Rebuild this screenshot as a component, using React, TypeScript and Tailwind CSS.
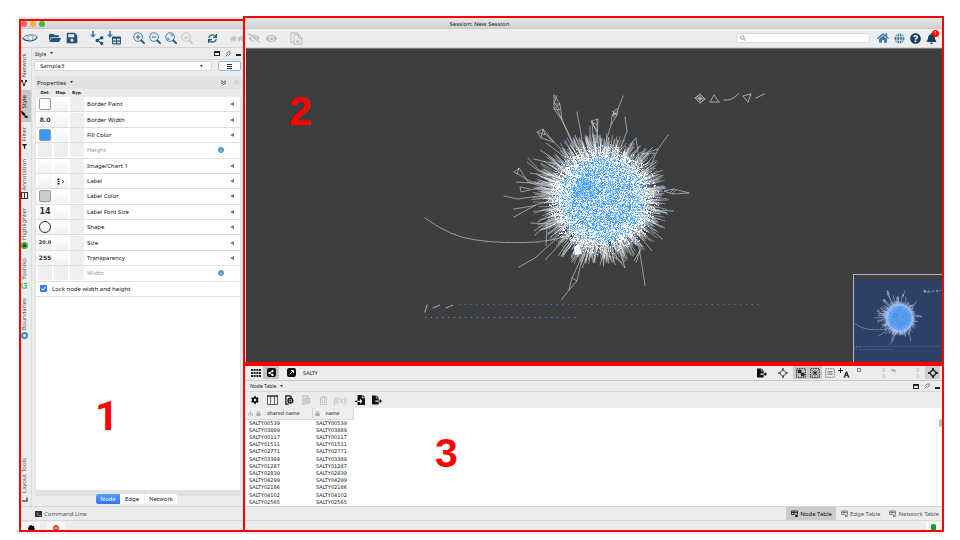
import React from "react";
import {
  FaFolderOpen, FaSave, FaShareAlt, FaTable, FaSync, FaHome, FaQuestionCircle,
  FaBell, FaEyeSlash, FaEye, FaSearch, FaFilter, FaCog, FaFileExport,
  FaFileImport, FaLock, FaSitemap, FaTerminal, FaPaintBrush, FaInfoCircle,
  FaMinusCircle, FaCloud, FaFont, FaRegTrashAlt,
} from "react-icons/fa";

/* ---------- network drawing ---------- */

function makeRandom(seed: number) {
  let a = seed;
  return () => {
    a = (a + 0x6d2b79f5) | 0;
    let t = Math.imul(a ^ (a >>> 15), 1 | a);
    t = (t + Math.imul(t ^ (t >>> 7), 61 | t)) ^ t;
    return ((t ^ (t >>> 14)) >>> 0) / 4294967296;
  };
}

const CX = 602;
const CY = 198;

function buildHub() {
  const rnd = makeRandom(7);
  let spikes = "";
  let tips = "";
  for (let i = 0; i < 680; i++) {
    const a = rnd() * Math.PI * 2;
    const left = Math.cos(a) < -0.3 ? 4 : 0;
    const r1 = 52 + Math.pow(rnd(), 1.2) * (15 + left);
    const b = a + (rnd() - 0.5) * 0.18;
    const x0 = CX + Math.cos(a) * 38;
    const y0 = CY + Math.sin(a) * 38;
    const x1 = CX + Math.cos(b) * r1;
    const y1 = CY + Math.sin(b) * r1;
    spikes += `M${x0.toFixed(1)} ${y0.toFixed(1)}L${x1.toFixed(1)} ${y1.toFixed(1)}`;
    if (i % 2) tips += `M${Math.round(x1)} ${Math.round(y1)}h1v1h-1z`;
  }
  let white = "";
  let pale = "";
  let blue = "";
  for (let y = -58; y <= 58; y++) {
    for (let x = -58; x <= 58; x++) {
      const r = Math.hypot(x, y);
      if (r > 58) continue;
      const keep = r < 40 ? 1 : Math.pow((58 - r) / 18, 1.3);
      if (rnd() > keep) continue;
      const core = Math.hypot(x + 18, y + 11);
      const pBlue = core < 11 ? 0.55 : r < 32 ? 0.36 : r < 42 ? 0.24 : 0.14;
      const p = rnd();
      const cell = `M${CX + x} ${CY + y}h1v1h-1z`;
      if (p < pBlue) blue += cell;
      else if (p < pBlue + (r < 42 ? 0.34 : 0.16)) pale += cell;
      else white += cell;
    }
  }
  return { spikes, tips, white, pale, blue };
}

const HUB = buildHub();

const BRANCHES = [
  "M554 94L560 103L562 119L554 108ZM554 108L560 103L555 103L560 109L554 108M557 94L554 103M562 119L557 108M562 119L577 150M562 119L574 146",
  "M623 95L618 108L617 114L611 124L612 115L615 109L618 108M612 115L618 110M612 110L617 115M613 113h5M614 110v7M611 124L605 144",
  "M537 131L543 128L554 141L541 137ZM537 131L545 134L543 128L541 137M544 132L554 141L572 160",
  "M577 111L582 138M590 125L590 147M625 116L627 130L621 146M591 120L598 118L597 142M592 120L597 131L591 120L597 124M594 142L592 121M597 142L597 118",
  "M668 134L658 148L650 166M658 148L642 153L655 152L645 166M636 137L629 145M636 137L639 158M653 146L640 158",
  "M689 192L674 188L664 190M689 192L672 193L664 190M674 188L670 192M672 193L676 189",
  "M514 171L519 167L528 181L545 187M514 171L530 180L542 184M519 167L517 173M520 186L521 191L534 188L545 189M520 186L530 188",
  "M504 195L518 198L545 194M514 208L532 205L550 200M514 216L536 204M535 234L555 216M531 222L552 223M534 230L550 218",
  "M528 157L540 170L550 175M527 161L540 171M534 158L555 163M540 149L560 162M546 142L566 157M530 172L550 175M516 181L545 183",
  "M519 266L535 257L555 239M546 258L563 240M558 255L568 241M546 245L547 222M571 262L585 246M582 267L590 249",
  "M562 298L569 289L572 277L577 280L569 289M577 280L580 266L585 253M572 277L583 253M573 258L580 250",
  "M645 284L641 259L639 246M652 250L642 238M662 238L650 227M673 210L655 209M665 227L648 219M625 267L610 247",
  "M600 264L603 254L616 257L622 262M616 264L604 248M625 267L620 250M641 247L636 262M634 260L640 249",
  "M425 217Q451 236 476 239Q504 243 537 241Q555 239 568 235",
];

const ISLANDS = [
  "M695 97L700 93L705 98L700 102ZM700 93V102M695 97L705 98M697 95L703 100M703 95L697 100",
  "M714 94L710 101H719Z",
  "M724 99Q732 100 738 93",
  "M743 95L751 93L748 101Z",
  "M756 97L764 93",
  "M427 304L425 311M433 307L440 304M446 307L453 304",
];

const DOTS: Array<[number, number]> = [
  [554, 94], [562, 119], [623, 95], [611, 124], [537, 131], [553, 141], [577, 111], [625, 116], [627, 130],
  [668, 134], [658, 148], [636, 137], [689, 192], [514, 171], [520, 186], [504, 195], [518, 198], [514, 208],
  [514, 216], [531, 222], [535, 234], [528, 157], [534, 158], [519, 266], [546, 258], [562, 298], [569, 289],
  [572, 277], [645, 284], [662, 238], [673, 210], [425, 217], [443, 228], [455, 233], [486, 241], [508, 241],
  [537, 241], [695, 97], [700, 93], [705, 98], [700, 102], [714, 94], [710, 101], [719, 101], [724, 99], [738, 93],
  [743, 95], [748, 101], [751, 93], [756, 97], [764, 93], [427, 304], [425, 311], [433, 307], [446, 307],
];

function Graph() {
  return (
    <g>
      <path d={HUB.spikes} stroke="#fff" strokeOpacity=".5" strokeWidth=".8" fill="none" />
      <path d={BRANCHES.join("")} stroke="#cfcfcf" strokeOpacity=".8" strokeWidth=".8" fill="none" />
      <path d={ISLANDS.join("")} stroke="#c4c4c4" strokeWidth=".8" fill="none" />
      <path d={HUB.tips} fill="#4a9df5" opacity=".7" />
      <circle cx={CX} cy={CY} r="40" fill="#cfe4fc" />
      <path d={HUB.white} fill="#fff" />
      <path d={HUB.pale} fill="#a3cffd" />
      <path d={HUB.blue} fill="#4ba3ff" />
      <path d="M574 246l5-3l3 10l-7 1z" fill="#fff" opacity=".9" />
      {DOTS.map(([x, y], i) => (
        <rect key={i} x={x - 0.5} y={y - 0.5} width="1.2" height="1.2" fill="#3f97f2" />
      ))}
      <line x1="459" x2="761" y1="303.5" y2="303.5" stroke="#3b82cc" strokeWidth="1" strokeDasharray="1.2 4.54" />
      <line x1="425" x2="576" y1="316.5" y2="316.5" stroke="#4a9df5" strokeWidth="1" strokeDasharray="1.2 4.54" />
    </g>
  );
}

/* ---------- small icons ---------- */

type ZoomKind = "in" | "out" | "fit" | "sel";

function Magnifier({ kind }: { kind: ZoomKind }) {
  const off = kind === "sel";
  const ring = off ? "#c4c4c4" : "#3d7ba6";
  const grip = off ? "#c4c4c4" : "#1f567a";
  const inner = {
    in: "M5.5 3v5M3 5.5h5",
    out: "M3 5.5h5",
    fit: "M6 3.2h1.8V5M5 7.8H3.2V6",
    sel: "M3.4 5.6l1.6 1.6 2.8-3",
  }[kind];
  return (
    <svg viewBox="0 0 13 13" className="size-3">
      <circle cx="5.5" cy="5.5" r="4.7" fill="none" stroke={ring} strokeWidth="1" />
      <path d="M9 9l3 3" stroke={grip} strokeWidth="2" strokeLinecap="round" />
      <path d={inner} stroke={ring} strokeWidth="1.2" fill="none" />
    </svg>
  );
}

function Logo() {
  return (
    <svg viewBox="0 0 16 10" className="w-4">
      <path d="M3 7.4Q0 6.4 1.2 4.6Q3 2 8 1.8Q13 1.6 14.6 3.2" fill="none" stroke="#4a86ad" strokeWidth="1" />
      <path d="M1.2 5.4Q4 8.8 10 7.6Q15.400 6.2 14.8 3.4" fill="none" stroke="#1f567a" strokeWidth="1.2" />
      <path d="M8.500 2.400Q4.500 3.500 5 5.400Q5.500 7 9 7.400M9 2.200Q12.500 3.600 10.500 6.800" fill="none" stroke="#6fa0bf" strokeWidth=".8" />
    </svg>
  );
}

function ImportArrow() {
  return (
    <svg viewBox="0 0 7 8" className="absolute top-px left-px w-[6px]" fill="#3d7ba6">
      <path d="M2.500 0h2v4H7L3.500 8L0 4h2.500z" />
    </svg>
  );
}

function GlobeIcon() {
  return (
    <svg viewBox="0 0 12 12" className="size-[11px]">
      <circle cx="6" cy="6" r="5.5" fill="#3d7ba6" />
      <path d="M0 4h12M0 8h12M6 0v12M3.8 .8Q1.8 6 3.8 11.2M8.2 .8Q10.2 6 8.2 11.2" stroke="#dfe9f0" strokeWidth=".9" fill="none" />
    </svg>
  );
}

function DocsIcon() {
  return (
    <svg viewBox="0 0 13 13" className="size-[13px]" fill="none" stroke="#b9b9b9">
      <path d="M3.500 10.500h-2.500V.8h6.500v1M4 2.500h4.500l3.500 3.500v6.300H4zM8.500 2.500V6H12" />
      <path d="M10 8L6.500 9.500L10 11" strokeWidth=".8" />
      <circle cx="6.800" cy="9.500" r=".6" fill="#b9b9b9" />
    </svg>
  );
}

function AddColumnIcon({ off }: { off?: boolean }) {
  const c = off ? "#bdbdbd" : "#151515";
  return (
    <svg viewBox="0 0 10 11" className="h-[10px] w-[9px]" fill="none" stroke={c}>
      <path d="M4 10.200H1V.8h4.500l2 2" strokeWidth="1.400" />
      <circle cx="6" cy="6.200" r="2.600" strokeWidth="1.500" />
      <path d="M6 4.800v2.800M4.600 6.200h2.800" strokeWidth=".9" />
    </svg>
  );
}

function ColumnsIcon() {
  return (
    <svg viewBox="0 0 11 10" className="w-[11px]" fill="none" stroke="#555">
      <path d="M.5 1v8.500h3V1M7.500 1v8.500h3V1M3.500 9.500h4" strokeWidth=".9" />
      <path d="M0 1h11" stroke="#222" strokeWidth="1.400" />
    </svg>
  );
}

function TargetIcon({ thin }: { thin?: boolean }) {
  return (
    <svg viewBox="0 0 10 10" className="size-[10px]" fill="none" stroke="#222" strokeWidth={thin ? 0.9 : 1.3}>
      <path d="M5 1.500L8.500 5L5 8.500L1.500 5Z" />
      <path d="M5 0v2.400M5 7.600V10M0 5h2.400M7.600 5H10" strokeWidth={thin ? 1.2 : 1.8} />
    </svg>
  );
}

function SelectBoxIcon({ kind }: { kind: "node" | "edge" | "label" }) {
  const c = kind === "label" ? "#777" : "#222";
  return (
    <svg viewBox="0 0 10 10" className="size-[10px]" fill="none" stroke={c}>
      <rect x=".7" y=".7" width="8.600" height="8.600" strokeDasharray="1.500 .8" strokeWidth="1" />
      {kind === "node" && <path d="M2.200 2.200h2.800v2.600h-2.800zM5.400 5.200h2.600v2.600h-2.600zM4 4l2 2" fill={c} />}
      {kind === "edge" && <path d="M2.500 2.500l5 5M7.500 2.500l-5 5M2.300 5h5.400M5 2.300v5.400" strokeWidth=".8" />}
      {kind === "label" && <path d="M2.500 3.500h5M2.500 5h5M2.500 6.500h5" strokeWidth=".8" />}
    </svg>
  );
}

function PanelControls() {
  return (
    <span className="flex items-center gap-[5px] text-[#222]">
      <button aria-label="Maximize panel" className="h-[5px] w-[6px] border border-t-2 border-[#222]" />
      <button aria-label="Undock panel" className="flex">
        <svg viewBox="0 0 6 6" className="size-[6px]" fill="none" stroke="#666" strokeWidth=".8"><path d="M.5 5.500L2.500 3.500M1.500 2.500L3.500 4.500L5 3L5.200 .8L3 1z" /></svg>
      </button>
      <button aria-label="Minimize panel" className="mt-[3px] h-[2px] w-[5px] bg-[#222]" />
    </span>
  );
}

/* ---------- window chrome ---------- */

function Tool({ label, children }: { label: string; children: React.ReactNode }) {
  return (
    <button aria-label={label} className="relative flex h-4 w-4 shrink-0 items-center justify-center">
      {children}
    </button>
  );
}

function MainToolbar() {
  return (
    <div className="flex h-[19px] shrink-0 items-center border-b border-[#d4d4d4] bg-[#ededed] pr-1 pl-[3px]">
      <div className="flex gap-[9px] text-[#1f567a]">
        <Tool label="Cytoscape"><Logo /></Tool>
        <div className="flex gap-px">
          <Tool label="Open session"><FaFolderOpen className="size-[12px]" /></Tool>
          <Tool label="Save session"><FaSave className="size-[12px]" /></Tool>
        </div>
        <div className="flex gap-px">
          <Tool label="Import network">
            <ImportArrow />
            <FaShareAlt className="absolute right-px bottom-px size-[9px]" />
          </Tool>
          <Tool label="Import table">
            <FaTable className="absolute right-px bottom-px size-[9px]" />
            <ImportArrow />
          </Tool>
        </div>
        <div className="flex">
          <Tool label="Zoom in"><Magnifier kind="in" /></Tool>
          <Tool label="Zoom out"><Magnifier kind="out" /></Tool>
          <Tool label="Fit content"><Magnifier kind="fit" /></Tool>
          <Tool label="Fit selected"><Magnifier kind="sel" /></Tool>
        </div>
        <Tool label="Apply layout"><FaSync className="size-[9px]" /></Tool>
        <div className="flex gap-px text-[#bdbdbd]">
          <Tool label="First neighbors">
            <FaHome className="size-[7px] shrink-0" /><FaHome className="size-[7px] shrink-0" />
          </Tool>
          <Tool label="Hide selected"><FaEyeSlash className="size-[12px]" /></Tool>
          <Tool label="Show all"><FaEye className="size-[11px]" /></Tool>
        </div>
        <Tool label="New network from selection"><DocsIcon /></Tool>
      </div>
      <label className="mr-[5px] ml-auto flex h-[10px] w-[134px] items-center rounded-[2px] border border-[#dadada] bg-white pl-[3px]">
        <FaSearch className="size-[6px] text-[#999]" />
        <input type="search" aria-label="Search" className="ml-1 w-full min-w-0 bg-transparent text-[6px] leading-none outline-none" />
      </label>
      <Tool label="Home"><FaHome className="size-[12px] text-[#3d7ba6]" /></Tool>
      <Tool label="Web"><GlobeIcon /></Tool>
      <Tool label="Help"><FaQuestionCircle className="size-[11px] text-[#123f5c]" /></Tool>
      <Tool label="Notifications">
        <FaBell className="size-[11px] text-[#123f5c]" />
        <span className="absolute top-0 right-0 flex size-[7px] items-center justify-center rounded-full bg-[#f00] text-[5px] leading-none text-white">1</span>
      </Tool>
    </div>
  );
}

function SideTab({ label, active, children }: { label: string; active?: boolean; children: React.ReactNode }) {
  return (
    <button className={`flex w-full flex-col items-center gap-[2px] pt-[5px] pr-[3px] pb-1 ${active ? "bg-[#c6c6c6] text-[#111]" : "text-[#505050]"}`}>
      <span className="rotate-180 text-[6px] leading-[8px] whitespace-nowrap [writing-mode:vertical-rl]">{label}</span>
      <span className="flex size-[7px] items-center justify-center">{children}</span>
    </button>
  );
}

function SideTabs() {
  return (
    <nav aria-label="Panels" className="flex w-[13px] shrink-0 flex-col border-r border-[#dcdcdc] pl-px">
      <SideTab label="Network">
        <svg viewBox="0 0 6 6" className="size-[6px]"><path d="M1 1L3 5L5 1" stroke="#333" fill="none" /><path d="M0 0h2v2H0zM4 0h2v2H4zM2 4h2v2H2z" fill="#333" /></svg>
      </SideTab>
      <SideTab label="Style" active><FaPaintBrush className="size-[7px] -scale-x-100 text-black" /></SideTab>
      <SideTab label="Filter"><FaFilter className="size-[5px] text-[#222]" /></SideTab>
      <SideTab label="Annotation"><span className="flex size-[7px] border border-[#333]"><i className="m-auto h-full w-px bg-[#333]" /></span></SideTab>
      <SideTab label="Highlighter"><span className="size-[7px] rounded-full border-2 border-[#3fae3f] bg-[#0b4d0b]" /></SideTab>
      <SideTab label="Yoshiko">
        <svg viewBox="0 0 7 7" className="size-[7px]" fill="none" stroke="#4fbf62"><path d="M1 1v4.500q2.500 1.500 4.500 0V3.500H3.500M3 .8L4 2L6 .8" strokeWidth="1.200" /></svg>
      </SideTab>
      <SideTab label="Boundaries"><span className="size-[7px] rounded-full border-2 border-[#3f8dc4] bg-[#d8ebf7]" /></SideTab>
      <div className="mt-auto">
        <SideTab label="Layout Tools">
          <svg viewBox="0 0 7 7" className="size-[7px]"><path d="M1 6H6V2.500" fill="none" stroke="#555" strokeWidth="1.600" /></svg>
        </SideTab>
      </div>
    </nav>
  );
}

/* ---------- style panel ---------- */

type Prop = { name: string; text?: string; size?: string; swatch?: string; shape?: boolean; map?: boolean; off?: boolean };

const PROPS: Prop[] = [
  { name: "Border Paint", swatch: "bg-white" },
  { name: "Border Width", text: "8.0", size: "text-[6px]" },
  { name: "Fill Color", swatch: "bg-[#3b99fc]" },
  { name: "Height", off: true },
  { name: "Image/Chart 1" },
  { name: "Label", map: true },
  { name: "Label Color", swatch: "bg-[#cccccc]" },
  { name: "Label Font Size", text: "14", size: "text-[8px]" },
  { name: "Shape", shape: true },
  { name: "Size", text: "20.0", size: "text-[5px]" },
  { name: "Transparency", text: "255", size: "text-[6px]" },
  { name: "Width", off: true },
];

function PropertyRow({ p }: { p: Prop }) {
  const cell = "flex h-[14px] w-[14px] shrink-0 items-center justify-center";
  const open = p.off ? "bg-[#eeeeee]" : "bg-linear-to-b from-white to-[#f1f1f1]";
  return (
    <li className="flex min-h-0 items-center gap-[2px] border-b border-[#dedede] pl-[2px]">
      <button aria-label={`${p.name} default`} className={`${cell} ${open}`}>
        {p.swatch && <span className={`size-[12px] rounded-[2px] border border-[#999] ${p.swatch}`} />}
        {p.text && <b className={`font-['DejaVu_Sans',sans-serif] leading-none text-[#333] ${p.size}`}>{p.text}</b>}
        {p.shape && <span className="size-[12px] rounded-full border border-[#333]" />}
      </button>
      <button aria-label={`${p.name} mapping`} className={`${cell} ${open}`}>
        {p.map && (
          <svg viewBox="0 0 8 7" className="w-[8px]" stroke="#222" fill="none">
            <path d="M1.500 .5v6" strokeWidth="2" strokeDasharray="1.600 .6" />
            <path d="M5 2l2 1.500l-2 1.500" strokeWidth=".8" />
          </svg>
        )}
      </button>
      <button aria-label={`${p.name} bypass`} className={`${cell} bg-[#eeeeee]`} />
      <span className={`ml-px flex-1 text-[6px] leading-[8px] ${p.off ? "text-[#999]" : "text-[#111]"}`}>{p.name}</span>
      {p.off ? (
        <FaInfoCircle className="mr-4 size-[6px] text-[#4a90ba]" />
      ) : (
        <button aria-label={`Expand ${p.name}`} className="mr-[6px] flex">
          <svg viewBox="0 0 4 4" className="size-[4px]"><path d="M4 0v4L0 2z" fill="#777" /></svg>
        </button>
      )}
    </li>
  );
}

function Caret() {
  return <svg viewBox="0 0 4 3" className="w-[3px]"><path d="M0 0h4L2 3z" fill="#444" /></svg>;
}

function StylePanel() {
  return (
    <section aria-label="Style" className="flex min-w-0 flex-1 flex-col bg-[#ececec] pr-[5px] text-[#222]">
      <div className="flex h-[11px] shrink-0 items-center gap-1 pl-[3px]">
        <h2 className="text-[5px] leading-[8px]">Style</h2><Caret />
        <span className="ml-auto"><PanelControls /></span>
      </div>
      <div className="flex h-[13px] shrink-0 items-center gap-[6px] border-t border-[#d8d8d8] pl-[2px]">
        <label className="relative flex h-[10px] flex-1 items-center rounded-[2px] border border-[#d6d6d6] bg-white">
          <select aria-label="Current style" className="w-full appearance-none bg-transparent pl-[5px] text-[6px] leading-[8px] outline-none">
            <option>Sample3</option>
          </select>
          <span className="pointer-events-none absolute right-2 flex"><Caret /></span>
        </label>
        <button aria-label="Style options" className="flex h-[10px] w-[23px] items-center justify-center rounded-[2px] border border-[#8dbbf0] bg-white">
          <span className="h-[5px] w-[5px] border-y border-[#333]"><i className="mt-px block h-px bg-[#333]" /></span>
        </button>
      </div>
      <div className="mt-1 ml-[3px] flex min-h-0 flex-1 flex-col bg-[#e2e2e2]">
        <div className="flex h-[13px] shrink-0 items-center gap-1 pr-[2px] pl-[2px]">
          <h3 className="text-[6px] leading-[8px]">Properties</h3><Caret />
          <button aria-label="Expand all" className="mr-1 ml-auto flex">
            <svg viewBox="0 0 5 5" className="size-[5px]" fill="none" stroke="#555"><path d="M0 .5l2.500 1.800L5 .5M0 2.700l2.500 1.800L5 2.700" /></svg>
          </button>
          <button aria-label="Collapse all" className="flex">
            <svg viewBox="0 0 5 5" className="size-[5px]" fill="none" stroke="#c2c2c2"><path d="M0 2.300L2.500 .5L5 2.300M0 4.500l2.500-1.800L5 4.500" /></svg>
          </button>
        </div>
        <div className="flex h-2 shrink-0 gap-[2px] bg-[#ebebeb] pl-[3px] text-center font-['DejaVu_Sans',sans-serif] text-[4px] leading-[8px] font-bold">
          <span className="w-[14px]">Def.</span><span className="w-[14px]">Map.</span><span className="w-[14px]">Byp.</span>
        </div>
        <div className="mx-px flex min-h-0 flex-1 flex-col bg-white">
          <ul className="grid h-[200px] shrink-0 grid-rows-[repeat(13,minmax(0,1fr))]">
            {PROPS.map((p) => <PropertyRow key={p.name} p={p} />)}
            <li className="flex items-center border-b border-[#dedede] pl-1">
              <label className="flex items-center gap-[5px] text-[6px] leading-[8px] text-[#111]">
                <span className="relative flex size-[7px]">
                  <input type="checkbox" defaultChecked className="size-[7px] appearance-none rounded-[1px] bg-[#3478f6]" />
                  <svg viewBox="0 0 7 7" className="pointer-events-none absolute inset-0 size-[7px]"><path d="M1.500 3.500l1.500 1.600l2.500-3.200" stroke="#fff" fill="none" /></svg>
                </span>
                Lock node width and height
              </label>
            </li>
          </ul>
        </div>
        <div className="h-[6px] shrink-0" />
      </div>
      <div role="tablist" className="mx-auto -mt-[2px] mb-[2px] flex h-[10px] shrink-0 overflow-hidden rounded-[2px] bg-white text-[6px] leading-[10px] text-[#111]">
        <button role="tab" className="w-6 bg-linear-to-b from-[#5a9ffb] to-[#2d74f4] text-white">Node</button>
        <button role="tab" className="w-6">Edge</button>
        <button role="tab" className="w-[33px] border-l border-[#eee]">Network</button>
      </div>
    </section>
  );
}

/* ---------- network view and table ---------- */

function NetworkCanvas() {
  return (
    <div className="relative min-h-0 flex-1 border-t border-[#777] bg-[#3e3e3e]">
      <svg aria-label="Network view" viewBox="246 49 697 315" preserveAspectRatio="xMidYMid meet" className="absolute inset-0 h-full w-full">
        <Graph />
      </svg>
      <div className="absolute right-0 bottom-0 h-[92px] w-[90px] border-t border-l border-[#aab4c8] bg-[#3e3e3e] py-[5px]">
        <svg aria-label="Bird's eye view" viewBox="425 55 345 304" preserveAspectRatio="none" className="h-full w-full bg-[#2f3f66]">
          <path d={BRANCHES.join("")} stroke="#a9bfe0" strokeWidth="2.500" strokeOpacity=".75" fill="none" />
          <path d={ISLANDS.join("")} stroke="#8fa9d4" strokeWidth="2.500" fill="none" />
          <path d={HUB.spikes} stroke="#bcd4f8" strokeWidth="1.200" strokeOpacity=".5" fill="none" />
          <circle cx={CX} cy={CY} r="56" fill="#8fbdf8" opacity=".6" />
          <circle cx={CX} cy={CY} r="46" fill="#3b8ff5" opacity=".85" />
          <path d={HUB.white} fill="#fff" opacity=".35" />
          <line x1="459" x2="761" y1="303.500" y2="303.500" stroke="#3e5c96" strokeWidth="3" />
          <line x1="425" x2="576" y1="316.500" y2="316.500" stroke="#3e5c96" strokeWidth="3" />
        </svg>
      </div>
    </div>
  );
}

function Counter({ children }: { children: React.ReactNode }) {
  return (
    <span className="flex w-[34px] justify-between pr-1 pl-[2px] text-[5px] leading-[6px] text-[#aaa]">
      <span className="pt-px">{children}</span>
      <span>0<br />0</span>
    </span>
  );
}

function ViewToolbar() {
  return (
    <div className="flex h-[15px] shrink-0 items-center border-b border-[#c9c9c9] bg-[#ececec] pr-[3px] pb-px pl-[2px] text-[#111]">
      <button aria-label="Show grid" className="flex h-full w-[15px] items-center justify-center">
        <svg viewBox="0 0 10 8" className="w-[10px]"><path d="M0 1h10M0 4h10M0 7h10" stroke="#222" strokeWidth="2" strokeDasharray="2 .66" /></svg>
      </button>
      <button aria-label="Show view" className="flex h-full w-4 items-center justify-center bg-[#c4c4c4]">
        <span className="flex size-[9px] items-center justify-center rounded-[2px] bg-[#111]"><FaShareAlt className="size-[6px] text-white" /></span>
      </button>
      <button aria-label="Detach view" className="ml-[5px] flex h-full w-[14px] items-center justify-center">
        <span className="flex size-[9px] items-center justify-center rounded-[2px] bg-[#111]">
          <svg viewBox="0 0 7 7" className="size-[7px]" stroke="#fff" fill="none"><path d="M1.500 5.500l4-4M3 1.500h2.500V4" /></svg>
        </span>
      </button>
      <span className="ml-[5px] font-['DejaVu_Sans',sans-serif] text-[5px] leading-[8px] text-[#222]">SALTY</span>
      <button aria-label="Export image" className="mr-[6px] ml-auto flex h-full w-4 items-center justify-center"><FaFileExport className="size-[10px]" /></button>
      <button aria-label="Always show details" className="mr-px flex h-full w-[14px] items-center justify-center"><TargetIcon thin /></button>
      <button aria-label="Node selection" className="ml-[2px] flex h-full w-[15px] items-center justify-center bg-[#c8c8c8]"><SelectBoxIcon kind="node" /></button>
      <button aria-label="Edge selection" className="flex h-full w-[14px] items-center justify-center bg-[#c8c8c8]"><SelectBoxIcon kind="edge" /></button>
      <button aria-label="Annotation selection" className="flex h-full w-[15px] items-center justify-center"><SelectBoxIcon kind="label" /></button>
      <button aria-label="Label selection" className="relative mr-1 flex h-full w-[14px] items-center justify-center">
        <FaFont className="mt-[3px] ml-1 size-[7px]" />
        <svg viewBox="0 0 5 5" className="absolute top-[2px] left-px size-[5px]" stroke="#222"><path d="M2.500 0v5M0 2.500h5" /></svg>
      </button>
      <Counter><i className="block size-1 border border-[#888]" /></Counter>
      <Counter><FaEyeSlash className="size-[5px] text-[#999]" /></Counter>
      <button aria-label="Bird's eye view toggle" className="ml-[2px] flex h-full w-[15px] items-center justify-center bg-[#cdcdcd]"><TargetIcon /></button>
    </div>
  );
}

const IDS = ["00539", "03889", "00117", "01511", "02771", "03389", "01287", "02839", "04299", "02186", "04102", "02565"];

function TablePanel() {
  return (
    <section aria-label="Node Table" className="shrink-0 bg-[#ececec]">
      <div className="flex h-[11px] items-center gap-1 border-b border-[#d8d8d8] pr-[3px] pl-1 text-[#222]">
        <h2 className="text-[5px] leading-[8px]">Node Table</h2><Caret />
        <span className="ml-auto"><PanelControls /></span>
      </div>
      <div className="flex h-4 items-center gap-px pl-px text-[#111]">
        <Tool label="Options"><FaCog className="size-[8px]" /></Tool>
        <Tool label="Show columns"><ColumnsIcon /></Tool>
        <Tool label="Create column"><AddColumnIcon /></Tool>
        <Tool label="Create equation column"><AddColumnIcon off /></Tool>
        <Tool label="Delete column"><FaRegTrashAlt className="size-[9px] text-[#bdbdbd]" /></Tool>
        <Tool label="Function builder"><i className="font-['Liberation_Serif',serif] text-[9px] leading-none text-[#b4b4b4]">f(x)</i></Tool>
        <span className="w-[2px]" />
        <Tool label="Import table file"><FaFileImport className="size-[10px]" /></Tool>
        <Tool label="Export table file"><FaFileExport className="size-[10px]" /></Tool>
      </div>
      <div className="flex h-[98px] bg-white font-['DejaVu_Sans',sans-serif]">
        <table className="h-[98px] w-[108px] table-fixed border-collapse text-left text-[5px] leading-[7px] text-[#111]">
          <thead>
            <tr className="h-[11px] bg-[#eeeeee]">
              <th className="w-[66px] border-r border-b border-[#d6d6d6] p-0 font-normal">
                <span className="flex items-center gap-[3px] pl-[2px]">
                  <FaSitemap className="size-[5px] text-[#aaa]" /><FaLock className="size-[5px] text-[#aaa]" /><span className="ml-[3px]">shared name</span>
                </span>
              </th>
              <th className="border-r border-b border-[#d6d6d6] p-0 font-normal">
                <span className="flex items-center gap-[6px] pl-[2px]"><FaLock className="size-[5px] text-[#aaa]" />name</span>
              </th>
            </tr>
          </thead>
          <tbody>
            {IDS.map((id) => (
              <tr key={id}>
                <td className="p-0 pl-[3px]">SALTY{id}</td>
                <td className="p-0 pl-[4px]">SALTY{id}</td>
              </tr>
            ))}
          </tbody>
        </table>
        <div className="mt-[11px] ml-auto w-[7px] border-l border-[#eee] pl-[2px]"><div className="h-2 w-[3px] rounded-full bg-[#bbb]" /></div>
      </div>
    </section>
  );
}

function BottomTab({ label, active }: { label: string; active?: boolean }) {
  return (
    <button role="tab" className={`flex h-full items-center gap-[2px] pr-1 pl-[5px] text-[6px] leading-[8px] whitespace-nowrap ${active ? "bg-[#cacaca] text-[#111]" : "text-[#555]"}`}>
      <svg viewBox="0 0 7 7" className="size-[7px]" fill="none" stroke={active ? "#222" : "#777"}>
        <path d="M.5 1h6v3.500M.5 1v3.500h3M.5 2.500h6M3 1v3.500" strokeWidth=".9" />
        <path d="M4.500 5h1.800v1.500h-1.800z" fill={active ? "#111" : "none"} strokeWidth=".9" />
      </svg>
      {label}
    </button>
  );
}

/* ---------- numbered regions laid over the window ---------- */

function Callouts() {
  const numeral = "text-[41px] leading-none font-bold text-[#f00]";
  return (
    <div className="pointer-events-none absolute inset-0">
      <div className="absolute top-[2px] bottom-[2px] left-0 flex w-[226px] items-end border-2 border-[#f00] pb-[93px] pl-[74px]">
        <span className={`font-['Roboto',sans-serif] ${numeral}`}>1</span>
      </div>
      <div className="absolute -top-px -right-px bottom-[170px] left-[224px] flex items-start border-2 border-[#f00] pt-[73px] pl-[44px]">
        <span className={`font-['Liberation_Sans',Arial,sans-serif] ${numeral}`}>2</span>
      </div>
      <div className="absolute -right-px bottom-[2px] left-[224px] flex h-[168px] items-start border-2 border-[#f00] pt-[67px] pl-[190px]">
        <span className={`font-['Liberation_Sans',Arial,sans-serif] ${numeral}`}>3</span>
      </div>
    </div>
  );
}

export default function App() {
  return (
    <div className="flex h-screen min-h-[540px] bg-white pt-[17px] pr-[17px] pb-[6px] pl-[19px] font-['Noto_Sans','Open_Sans',sans-serif]">
      <main className="relative flex min-w-0 flex-1 flex-col bg-[#ececec]">
        <header className="relative flex h-[12px] shrink-0 items-center gap-[3px] border-b border-[#c8c8c8] bg-linear-to-b from-[#e9e9e9] to-[#d2d2d2] pt-[2px] pl-[2px]">
          <button aria-label="Close" className="size-[6px] rounded-full bg-[#f35f57]" />
          <button aria-label="Minimize" className="size-[6px] rounded-full bg-[#f8b32f]" />
          <button aria-label="Zoom" className="size-[6px] rounded-full bg-[#37bf3c]" />
          <h1 className="flex-1 pr-8 text-center text-[6px] leading-[8px] text-[#222]">Session: New Session</h1>
        </header>
        <MainToolbar />
        <div className="flex min-h-0 flex-1">
          <div className="flex w-[227px] shrink-0">
            <SideTabs />
            <StylePanel />
          </div>
          <div className="flex min-w-0 flex-1 flex-col">
            <NetworkCanvas />
            <ViewToolbar />
            <TablePanel />
          </div>
        </div>
        <div className="flex h-[14px] shrink-0 items-center border-t border-[#d6d6d6]">
          <button className="flex items-center gap-[2px] pl-4 text-[6px] leading-[8px] text-[#555]">
            <span className="flex h-[6px] w-[7px] items-center justify-center bg-[#333]"><FaTerminal className="size-[4px] text-white" /></span>
            Command Line
          </button>
          <div role="tablist" className="ml-auto flex h-full">
            <BottomTab label="Node Table" active />
            <BottomTab label="Edge Table" />
            <BottomTab label="Network Table" />
          </div>
        </div>
        <footer className="flex h-[14px] shrink-0 items-center gap-[7px] border-t border-[#dadada] px-[3px]">
          <button aria-label="Tasks" className="flex h-[11px] w-[18px] items-center justify-center bg-[#fafafa]"><FaCloud className="size-[7px] text-black" /></button>
          <button aria-label="Stop" className="flex h-[11px] w-[18px] items-center justify-center bg-[#fafafa]"><FaMinusCircle className="size-[6px] text-[#d2372d]" /></button>
          <button aria-label="Memory" className="ml-auto flex h-[11px] w-[14px] items-center justify-center bg-[#fafafa]"><span className="h-[7px] w-[5px] rounded-[2px] bg-[#119c3c]" /></button>
        </footer>
        <Callouts />
      </main>
    </div>
  );
}
